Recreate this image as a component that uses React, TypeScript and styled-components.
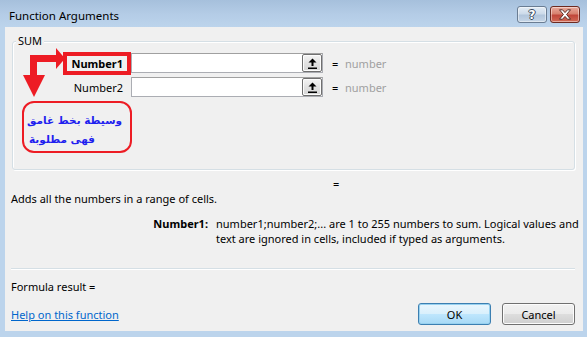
import React from 'react';
import styled, { createGlobalStyle } from 'styled-components';

const GlobalStyle = createGlobalStyle`
  html, body {
    margin: 0;
    padding: 0;
    background: #b9d1ea;
  }
  body {
    font-family: 'Noto Sans', 'Open Sans', sans-serif;
    font-size: 11px;
    color: #000;
  }
`;

const args = [
  { name: 'Number1', value: 'number', required: true },
  { name: 'Number2', value: 'number', required: false },
];

const Window = styled.div`
  width: 587px;
  height: 337px;
  display: flex;
  flex-direction: column;
  background: linear-gradient(#a6c0dc 0px, #b4cce6 14px, #bcd4ec 27px, #bcd4ec 100%);
  box-sizing: border-box;
`;

const TitleBar = styled.div`
  height: 27px;
  flex-shrink: 0;
  display: flex;
  align-items: flex-start;
  padding: 0 7px 0 9px;
`;

const Title = styled.div`
  margin-top: 8px;
  flex: 1;
  line-height: 15px;
  font-size: 11.5px;
  color: #000;
`;

const CaptionButtons = styled.div`
  display: flex;
  gap: 3px;
  margin-top: 6px;
`;

const CaptionButton = styled.div<{ $close?: boolean }>`
  width: 30px;
  height: 17px;
  box-sizing: border-box;
  border-radius: 3px;
  border: 1px solid ${(p) => (p.$close ? '#6d2a20' : '#6a7d93')};
  background: ${(p) =>
    p.$close
      ? 'linear-gradient(#eaa99b 0%, #d7826f 45%, #c0473a 55%, #d26a55 100%)'
      : 'linear-gradient(#e4ecf5 0%, #cddbea 45%, #b2c6dc 55%, #c6d6e7 100%)'};
  box-shadow: inset 0 0 0 1px rgba(255, 255, 255, 0.45);
  display: flex;
  align-items: center;
  justify-content: center;
  font-family: 'DejaVu Sans', sans-serif;
  font-weight: bold;
  font-size: 12px;
  color: #fff;
  text-shadow: -1px 0 #3b4a5c, 1px 0 #3b4a5c, 0 -1px #3b4a5c, 0 1px #3b4a5c;
`;

const Client = styled.div`
  margin: 0 4px 0 5px;
  height: 304px;
  flex-shrink: 0;
  background: #f0f0f0;
  box-sizing: border-box;
  padding: 14px 8px 0 6px;
  display: flex;
  flex-direction: column;

  & > * {
    flex-shrink: 0;
  }
`;

const GroupBox = styled.div`
  position: relative;
  margin-left: 1px;
  height: 129px;
  box-sizing: border-box;
  border: 1px solid #d5dfe5;
  border-radius: 3px;
  box-shadow: inset 1px 1px 0 #fff, 1px 1px 0 #fff;
  padding: 11px 0 0 0;
`;

const Legend = styled.span`
  position: absolute;
  left: 3px;
  top: -9px;
  padding: 0 2px;
  background: #f0f0f0;
  line-height: 16px;
`;

const ArgRow = styled.div`
  display: grid;
  grid-template-columns: 118px 192px 22px auto;
  align-items: center;
  height: 20px;
  margin-bottom: 4px;
`;

const ArgLabel = styled.div`
  text-align: right;
  padding-right: 4px;
`;

const LabelText = styled.span<{ $required?: boolean }>`
  display: inline-block;
  line-height: 15px;
  padding: 0 4px;
  font-weight: ${(p) => (p.$required ? 'bold' : 'normal')};
  outline: ${(p) => (p.$required ? '4px solid #ed1c24' : 'none')};
  outline-offset: 0;
`;

const InputBox = styled.div`
  height: 20px;
  box-sizing: border-box;
  border: 1px solid #abadb3;
  border-top-color: #a0a0a0;
  background: #fff;
  display: flex;
  justify-content: flex-end;
  align-items: center;
`;

const CollapseButton = styled.div`
  width: 20px;
  height: 18px;
  box-sizing: border-box;
  border: 1px solid #707070;
  border-radius: 2px;
  background: linear-gradient(#f4f4f4, #e2e2e2 50%, #d6d6d6);
  box-shadow: inset 0 0 0 1px #fcfcfc;
  display: flex;
  align-items: center;
  justify-content: center;
`;

const Equals = styled.span`
  padding-left: 9px;
`;

const ValueText = styled.span`
  color: #a0a0a0;
`;

const Note = styled.div`
  margin: 2px 0 0 9px;
  width: 110px;
  height: 52px;
  box-sizing: border-box;
  border: 2px solid #ed1c24;
  border-radius: 12px;
  direction: rtl;
  font-family: 'DejaVu Sans', sans-serif;
  font-weight: bold;
  font-size: 10.5px;
  line-height: 19px;
  color: #1f1fef;
  padding: 8px 8px 0 0;
`;

const NoteLine = styled.div<{ $indent?: number }>`
  padding-right: ${(p) => p.$indent ?? 0}px;
  white-space: nowrap;
`;

const ArrowLayer = styled.svg`
  position: absolute;
  left: -13px;
  top: -42px;
  pointer-events: none;
`;

const Line = styled.div`
  line-height: 15px;
  white-space: nowrap;
`;

const EqualsLine = styled(Line)`
  margin-top: 6px;
  padding-left: 322px;
`;

const Detail = styled.div`
  margin-top: 10px;
  display: grid;
  grid-template-columns: 197px 366px;
  column-gap: 8px;
  line-height: 15px;
`;

const DetailName = styled.div`
  text-align: right;
  font-weight: bold;
`;

const Separator = styled.div`
  margin-top: 22px;
  height: 1px;
  background: #d5dfe5;
  border-bottom: 1px solid #fff;
`;

const ResultLine = styled(Line)`
  margin-top: 9px;
`;

const Footer = styled.div`
  margin-top: 9px;
  display: flex;
  align-items: center;
  gap: 11px;
`;

const HelpLink = styled.a`
  flex: 1;
  color: #0066cc;
  text-decoration: underline;
  line-height: 15px;
  cursor: pointer;
`;

const DialogButton = styled.button<{ $default?: boolean }>`
  width: 73px;
  height: 22px;
  box-sizing: border-box;
  font-family: inherit;
  font-size: 11px;
  color: #000;
  padding: 0;
  border-radius: 3px;
  border: 1px solid ${(p) => (p.$default ? '#3c7fb1' : '#707070')};
  background: ${(p) =>
    p.$default
      ? 'linear-gradient(#eaf6fd 0%, #d9f0fc 48%, #bee6fd 52%, #a7d9f5 100%)'
      : 'linear-gradient(#f2f2f2 0%, #ebebeb 48%, #dddddd 52%, #cfcfcf 100%)'};
  box-shadow: inset 0 0 0 1px ${(p) => (p.$default ? '#98d1ef' : '#fcfcfc')};
`;

function UpArrowIcon() {
  return (
    <svg width="9" height="11" viewBox="0 0 9 11">
      <path d="M4.5 0.5 L8.5 4.5 L5.5 4.5 L5.5 8 L3.5 8 L3.5 4.5 L0.5 4.5 Z" fill="#000" />
      <rect x="0" y="9.5" width="9" height="1.5" fill="#000" />
    </svg>
  );
}

function CloseIcon() {
  return (
    <svg width="14" height="11" viewBox="0 0 14 11">
      <path
        d="M1.5 0.8 L4.5 0.8 L7 3.6 L9.5 0.8 L12.5 0.8 L8.6 5.5 L12.5 10.2 L9.5 10.2 L7 7.4 L4.5 10.2 L1.5 10.2 L5.4 5.5 Z"
        fill="#fff"
        stroke="#4a2018"
        strokeWidth="0.9"
        strokeLinejoin="round"
      />
    </svg>
  );
}

function Annotation() {
  // drawn in page coordinates: the layer's origin sits at the window's top-left
  return (
    <ArrowLayer width="70" height="100" viewBox="0 0 70 100">
      <g fill="#ed1c24">
        <rect x="30" y="55" width="27" height="7" />
        <path d="M56 48 L65 58.5 L56 69 Z" />
        <rect x="30" y="55" width="7" height="21" />
        <path d="M23 75 L45 75 L34 97 Z" />
      </g>
    </ArrowLayer>
  );
}

export default function App() {
  return (
    <>
      <GlobalStyle />
      <Window>
        <TitleBar>
          <Title>Function Arguments</Title>
          <CaptionButtons>
            <CaptionButton>?</CaptionButton>
            <CaptionButton $close>
              <CloseIcon />
            </CaptionButton>
          </CaptionButtons>
        </TitleBar>
        <Client>
          <GroupBox>
            <Legend>SUM</Legend>
            {args.map((arg) => (
              <ArgRow key={arg.name}>
                <ArgLabel>
                  <LabelText $required={arg.required}>{arg.name}</LabelText>
                </ArgLabel>
                <InputBox>
                  <CollapseButton>
                    <UpArrowIcon />
                  </CollapseButton>
                </InputBox>
                <Equals>=</Equals>
                <ValueText>{arg.value}</ValueText>
              </ArgRow>
            ))}
            <Note>
              <NoteLine>وسيطة بخط غامق</NoteLine>
              <NoteLine $indent={27}>فهى مطلوبة</NoteLine>
            </Note>
            <Annotation />
          </GroupBox>
          <EqualsLine>=</EqualsLine>
          <Line>Adds all the numbers in a range of cells.</Line>
          <Detail>
            <DetailName>Number1:</DetailName>
            <div>
              number1;number2;... are 1 to 255 numbers to sum. Logical values and text are
              ignored in cells, included if typed as arguments.
            </div>
          </Detail>
          <Separator />
          <ResultLine>Formula result =</ResultLine>
          <Footer>
            <HelpLink>Help on this function</HelpLink>
            <DialogButton $default>OK</DialogButton>
            <DialogButton>Cancel</DialogButton>
          </Footer>
        </Client>
      </Window>
    </>
  );
}
